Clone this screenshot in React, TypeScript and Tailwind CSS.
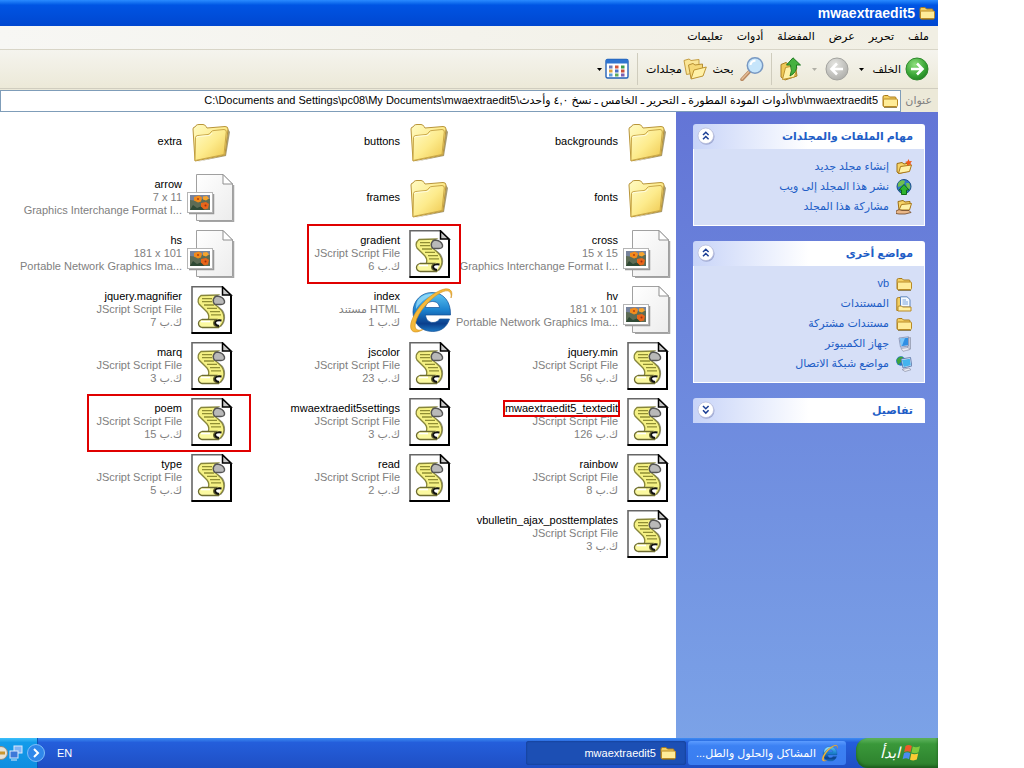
import React from "react";

type Kind = "folder" | "image" | "script" | "html";
type FileItem = {
  name: string;
  kind: Kind;
  type?: string;
  size?: string;
  mark?: "frame-wide" | "frame-low" | "name";
};

const script = (name: string, kb: number, mark?: FileItem["mark"]): FileItem => ({
  name,
  kind: "script",
  type: "JScript Script File",
  size: `ك.ب ${kb}`,
  mark,
});
const folder = (name: string): FileItem => ({ name, kind: "folder" });
const image = (name: string, dims: string, type: string): FileItem => ({
  name,
  kind: "image",
  type: dims,
  size: type,
});

const GIF = "Graphics Interchange Format I...";
const PNG = "Portable Network Graphics Ima...";

const files: FileItem[] = [
  folder("backgrounds"),
  folder("buttons"),
  folder("extra"),
  folder("fonts"),
  folder("frames"),
  image("arrow", "7 x 11", GIF),
  image("cross", "15 x 15", GIF),
  script("gradient", 6, "frame-wide"),
  image("hs", "181 x 101", PNG),
  image("hv", "181 x 101", PNG),
  { name: "index", kind: "html", type: "HTML مستند", size: "ك.ب 1" },
  script("jquery.magnifier", 7),
  script("jquery.min", 56),
  script("jscolor", 23),
  script("marq", 3),
  script("mwaextraedit5_textedit", 126, "name"),
  script("mwaextraedit5settings", 3),
  script("poem", 15, "frame-low"),
  script("rainbow", 8),
  script("read", 2),
  script("type", 5),
  script("vbulletin_ajax_posttemplates", 3),
];

function Defs() {
  return (
    <svg width="0" height="0" className="absolute" aria-hidden="true">
      <defs>
        <linearGradient id="fold" x1="0" y1="0" x2="1" y2="1">
          <stop offset="0" stopColor="#fffbc4" />
          <stop offset="0.5" stopColor="#fdeb8c" />
          <stop offset="1" stopColor="#eec64c" />
        </linearGradient>
        <linearGradient id="page" x1="0" y1="0" x2="1" y2="1">
          <stop offset="0" stopColor="#ffffff" />
          <stop offset="1" stopColor="#ececec" />
        </linearGradient>
        <linearGradient id="ieblue" x1="0" y1="0" x2="0" y2="1">
          <stop offset="0" stopColor="#5cc4f2" />
          <stop offset="0.45" stopColor="#1c83cf" />
          <stop offset="0.8" stopColor="#0b3f8c" />
          <stop offset="1" stopColor="#1c78c4" />
        </linearGradient>
        <radialGradient id="green" cx="0.4" cy="0.3" r="0.8">
          <stop offset="0" stopColor="#8fe07e" />
          <stop offset="0.6" stopColor="#3aa636" />
          <stop offset="1" stopColor="#1b7a1c" />
        </radialGradient>
        <radialGradient id="grey" cx="0.4" cy="0.3" r="0.8">
          <stop offset="0" stopColor="#e6e6e2" />
          <stop offset="1" stopColor="#a9a9a5" />
        </radialGradient>
      </defs>
    </svg>
  );
}

function FolderLarge() {
  return (
    <svg viewBox="0 0 48 48" className="size-12 shrink-0" aria-hidden="true">
      <path d="M9 44 L39 38 L43 14 L41 11 L38 37 Z" fill="#8a7a45" opacity=".75" />
      <path d="M6 11 Q6 9 8 9 L9 7.5 Q10 6.500 12 6.500 L16 6.500 Q18 6.500 19 8.500 L20 10 L38 8.500 Q41 8.500 41 11 L38 37 L8 43 Z" fill="url(#fold)" stroke="#b9953a" />
      <path d="M8.500 20 Q8.500 17.500 11 17.500 L21 16.500 Q23 16 24 14 Q25 12.500 27 12.500 L37 11.500 Q39.500 11.500 39.300 14 L37 36.500 L8 42.500 Z" fill="url(#fold)" stroke="#c9a748" />
      <path d="M9.500 20 Q9.500 18.500 11 18.500 L22 17.500 Q24 17 25 15" fill="none" stroke="#fffde0" />
    </svg>
  );
}

function ImageFile() {
  return (
    <svg viewBox="0 0 48 48" className="size-12 shrink-0" aria-hidden="true">
      <path d="M12 47.500 H46.500 V11" fill="none" stroke="#a5a5a5" strokeWidth="1.500" />
      <path d="M9.500 .5 H36 L45.500 10 V46.500 H9.500 Z" fill="url(#page)" stroke="#a0a0a0" />
      <path d="M36 .5 V10 H45.500 Z" fill="#fff" stroke="#8f8f8f" />
      <path d="M2 39.500 H26.500 V20" fill="none" stroke="#999" strokeWidth="1.500" />
      <rect x=".5" y="18.500" width="25" height="20" fill="#fff" stroke="#b5b5b5" />
      <rect x="3" y="21" width="20" height="15" fill="#5d6c55" />
      <path d="M3 21 h20 v4 l-6 -1 -5 3 -9 -1z" fill="#77839c" />
      <path d="M3 36 l3 -5 4 3 5 -2 3 4z" fill="#2f4a35" />
      <path d="M7 23 l5 -1.500 3 2 -1 4 -3 1 -4 -2z" fill="#f28b1c" />
      <path d="M14 29 l5 -1 3 2 -1 4.500 -4 1 -3 -3z" fill="#e8661a" />
      <path d="M16 22.500 l4 -.5 2 2.500 -3 2 -3 -1z" fill="#f7a52e" />
      <circle cx="11" cy="25" r="1" fill="#b43d10" />
      <circle cx="18.500" cy="31.500" r="1" fill="#a22f0e" />
    </svg>
  );
}

function ScriptFile() {
  return (
    <svg viewBox="0 0 48 48" className="size-12 shrink-0" aria-hidden="true">
      <path d="M5 .8 H35.500 L44 9.500 V47 H5 Z" fill="#fff" stroke="#666" strokeWidth="1.600" />
      <path d="M4.500 47 H44 V9.500" fill="none" stroke="#000" strokeWidth="2" />
      <path d="M35.500 1 V9 H44 Z" fill="#c9c9c9" stroke="#000" strokeWidth="1.500" />
      <path d="M22 29 Q27 33 22 34 L34 41 Q39 36 38 29 Q37 23 29 19 Z" fill="#999" />
      <path d="M14 9.500 L31 9 Q26 12 27 16 Q28 19 32 22 Q37 26 37 32 Q36.500 38 32 41 L27 38 L21 34 Q23 30 20 26 L12 18 Q9.500 13 14 9.500 Z" fill="#f5f184" stroke="#86853a" strokeWidth="1.300" />
      <path d="M30 10 Q36 10.500 37.500 15 Q38 18.500 34 18.500 L28 18.500 Q25.500 16.500 26.500 13 Q28 10 30 10 Z" fill="#b9b9b9" stroke="#555" strokeWidth="1.400" />
      <path d="M15 33.500 H29 Q25 36.500 27.500 39.500 L32 41.500 H15 Q11.500 40.500 11.500 37.500 Q11.500 34.500 15 33.500 Z" fill="#fbf9a0" stroke="#6d6c30" strokeWidth="1.300" />
      <path d="M14 35.500 H23" stroke="#fff" strokeWidth="1.600" />
      <path d="M34.500 34.500 Q28.500 33.500 28 37 Q28.500 39.500 32 40" fill="#fff" stroke="#111" strokeWidth="1.900" />
      <path d="M15 12.700 H25 M15 15.700 H25 M17 19 H27 M20 22.300 H30 M23 25.600 H33 M24 28.900 H34" stroke="#8f8d33" strokeWidth="1.300" />
    </svg>
  );
}

function IeIcon({ className }: { className: string }) {
  return (
    <svg viewBox="0 0 48 48" className={className} aria-hidden="true">
      <path d="M27 6.500 C38 6.500 46 15 45.500 29 H20.500 C21 34 24 36.500 28 36.500 C31 36.500 33.500 35 34.500 33 H44.500 C42 41 36 45.500 27.500 45.500 C16 45.500 8 37 8 26 C8 15 16 6.500 27 6.500 Z M20.500 21.500 H34.500 C34 17.500 31.500 15.500 27.500 15.500 C23.500 15.500 21 18 20.500 21.500 Z" fill="url(#ieblue)" stroke="#0e4d96" strokeWidth=".7" fillRule="evenodd" />
      <path d="M13 14 C17 9 24 7 30 8.500 C24 10 17 14 11 23 C11 19 11.500 16 13 14Z" fill="#a5e2fb" opacity=".7" />
      <path d="M46 12 C49 4 44 .5 35 4.500 C22 10 9 25 6 37 C4 46 10 48.500 18 43.500 C12 45.500 9 43 10.500 37 C13 26 25 12.500 36 6.500 C43 3 47 5 46 12 Z" fill="#f5b93a" stroke="#d08f1c" strokeWidth=".6" />
    </svg>
  );
}

function FolderSmall() {
  return (
    <svg viewBox="0 0 16 16" className="size-4 shrink-0" aria-hidden="true">
      <path d="M1 4 Q1 2.500 2.500 2.500 H6 L7.500 4 H13 Q14 4 14 5 V13.500 H2 Q1 13.500 1 12.500 Z" fill="#f3cf62" stroke="#a97b1c" />
      <path d="M1.500 13 V7 Q1.500 6 2.500 6 H14.500 Q15.500 6 15.500 7 V12.500 Q15.500 13.500 14.500 13.500 H2.500 Z" fill="#ffec98" stroke="#b98a25" />
      <path d="M2 14.500 H15" stroke="#7f6a2e" strokeWidth=".8" />
    </svg>
  );
}

function NewFolder() {
  return (
    <svg viewBox="0 0 16 16" className="size-4 shrink-0" aria-hidden="true">
      <path d="M1 4.500 L6 3.500 L8 5 L13 4 V12 L3 14.500 L1 13 Z" fill="#f7d468" stroke="#9c6e14" />
      <path d="M2.500 14.500 L4.500 7.500 L15.500 6 L13.500 12.500 Z" fill="#fff2a8" stroke="#a9781b" />
      <path d="M12.500 0 L13.500 2.200 L16 2 L14.500 4 L15.500 6.200 L13 5.300 L11 7 L11 4.300 L9 3 L11.500 2.300 Z" fill="#ee5a1c" />
    </svg>
  );
}

function Globe() {
  return (
    <svg viewBox="0 0 16 16" className="size-4 shrink-0" aria-hidden="true">
      <circle cx="8" cy="7.500" r="7" fill="#2f78c6" stroke="#1c4f8c" />
      <path d="M3 3 Q6 0 9 2 L8 5 L5 7 L2 8 Q1 5 3 3Z M10 4 L13 4 Q15 7 14 10 L11 9 Z" fill="#6fc04e" />
      <path d="M8 5.500 L13 11 H10.500 V15.500 H5.500 V11 H3 Z" fill="#2fb52f" stroke="#0f6b16" />
    </svg>
  );
}

function ShareFolder() {
  return (
    <svg viewBox="0 0 16 16" className="size-4 shrink-0" aria-hidden="true">
      <path d="M2 2.500 L7 1.500 L9 3 L14 2.500 V9 L3 11 Z" fill="#f7d468" stroke="#9c6e14" />
      <path d="M3 11 L5.500 5.500 L15.500 4.500 L13.500 11 Z" fill="#fff2a8" stroke="#a9781b" />
      <path d="M0 12 Q3 9.500 6 11.500 L13 11.500 L15 13.500 L9 15 H3 L0 14.500 Z" fill="#e9b789" stroke="#6d4523" strokeWidth=".8" />
    </svg>
  );
}

function DocsIcon() {
  return (
    <svg viewBox="0 0 16 16" className="size-4 shrink-0" aria-hidden="true">
      <path d="M.8 3 Q.8 1.500 2.500 1.500 H5 V14.500 H.8 Z" fill="#f3cf62" stroke="#a97b1c" />
      <path d="M4.500 .8 H11 L14 3.500 V11 H4.500 Z" fill="#f4f9ff" stroke="#5e86bd" />
      <path d="M6.500 4 H10 M6.500 6 H12 M6.500 8 H12" stroke="#79a4dc" />
      <path d="M2 15 V11 Q2 10 3 10 H5.500 L6.500 11 H15 V15 Z" fill="#fff0a4" stroke="#b98a25" />
    </svg>
  );
}

function Computer() {
  return (
    <svg viewBox="0 0 16 16" className="size-4 shrink-0" aria-hidden="true">
      <path d="M11.500 2 L14.500 1.500 V13 L11.500 14 Z" fill="#c4c8d6" stroke="#8d93a8" strokeWidth=".7" />
      <path d="M3 2 L12.500 .8 V10 L4.500 11.200 Z" fill="#dfe5f2" stroke="#7d8bb0" strokeWidth=".8" />
      <path d="M4 2.700 L12 1.700 V9.300 L5.200 10.300 Z" fill="#2f8fe4" />
      <path d="M4 2.700 L9 2 L6 9.800 L5.200 10.300 Z" fill="#7cc6f8" />
      <path d="M5 12.500 L12 11.500 L14 13.500 L7 15.300 Z" fill="#ececf4" stroke="#9298ac" strokeWidth=".7" />
    </svg>
  );
}

function Network() {
  return (
    <svg viewBox="0 0 16 16" className="size-4 shrink-0" aria-hidden="true">
      <circle cx="4.800" cy="5" r="4.700" fill="#2277c4" />
      <path d="M.5 4 Q3 -.5 7 1 L5 6 L2 9 Z" fill="#3ea53a" />
      <path d="M5 3 L14.500 1.500 L15.800 10 L7 12 Z" fill="#dfe5f2" stroke="#4f6da2" strokeWidth=".8" />
      <path d="M6 3.900 L13.800 2.700 L14.800 9.300 L7.700 10.900 Z" fill="#45b4ee" />
      <path d="M6 13.500 L13 12 L15 13.700 L9 15.500 Z" fill="#ececf4" stroke="#8b90a6" strokeWidth=".7" />
    </svg>
  );
}

function RoundArrow({ tone }: { tone: "green" | "grey" }) {
  return (
    <svg viewBox="0 0 24 24" className="size-6 shrink-0" aria-hidden="true">
      <circle cx="12" cy="12" r="11" fill={tone === "green" ? "url(#green)" : "url(#grey)"} stroke={tone === "green" ? "#2f8a2c" : "#a3a39f"} />
      {tone === "green" ? (
        <path d="M6 12 H17 M12 6.500 L17.500 12 L12 17.500" fill="none" stroke="#fff" strokeWidth="2.600" />
      ) : (
        <path d="M18 12 H7 M12 6.500 L6.500 12 L12 17.500" fill="none" stroke="#fff" strokeWidth="2.600" />
      )}
    </svg>
  );
}

function UpFolder() {
  return (
    <svg viewBox="0 0 24 24" className="size-6 shrink-0" aria-hidden="true">
      <path d="M2 7.500 L7 5.500 L9 7 L16 6 L18 19 L6 23 L2 20 Z" fill="#efc957" stroke="#a67d22" />
      <path d="M3.500 22.500 L6.500 10.500 L14 9 L18 10.500 L15.500 20 Z" fill="#fff1a5" stroke="#bd9431" />
      <path d="M14 .8 L21.500 8 H17.500 Q18.500 15 11 19 Q13.500 14 11.500 8 H7.500 Z" fill="#46b13f" stroke="#1f7a22" />
    </svg>
  );
}

function Magnifier() {
  return (
    <svg viewBox="0 0 24 24" className="size-6 shrink-0" aria-hidden="true">
      <path d="M9.500 14.500 L2 22.500" stroke="#b98a62" strokeWidth="3.500" strokeLinecap="round" />
      <path d="M9 14.500 L2 22" stroke="#e6bf98" strokeWidth="1.300" strokeLinecap="round" />
      <circle cx="15" cy="8.500" r="7.700" fill="#c6e5fb" stroke="#7898c2" strokeWidth="1.500" />
      <path d="M10.500 8 Q11 4 15.500 3.500" fill="none" stroke="#fff" strokeWidth="2" />
    </svg>
  );
}

function FoldersIcon() {
  return (
    <svg viewBox="0 0 24 24" className="size-6 shrink-0" aria-hidden="true">
      <path d="M1 3.500 L6 2 L8 3.500 L16 2.500 V15 L3.500 17.500 Z" fill="#fae596" stroke="#c49d41" />
      <path d="M5.500 8 L10 6.500 L12 8 L19.500 7 V17 L8 21.500 Z" fill="#f6d876" stroke="#b78f33" />
      <path d="M8 22 L11 13 L23.300 10 L20 19 Z" fill="#fff1a8" stroke="#bd9431" />
    </svg>
  );
}

function ViewsIcon() {
  const dots = ["#6b7bb8", "#d4553a", "#3f9c4c", "#e0a23c", "#4a6fc4", "#c84f3c", "#5f9ed6", "#60a95c", "#7d5fb0"];
  return (
    <svg viewBox="0 0 24 22" className="h-[22px] w-6 shrink-0" aria-hidden="true">
      <rect x="1" y="1.500" width="22" height="18.500" rx="1.500" fill="#fff" stroke="#2462b8" strokeWidth="1.400" />
      <rect x="1" y="1.500" width="22" height="4" fill="#2f74d0" />
      {dots.map((c, i) => (
        <rect key={i} x={4 + (i % 3) * 6} y={7.5 + Math.floor(i / 3) * 4} width="3.500" height="3" fill={c} />
      ))}
    </svg>
  );
}

function Caret({ muted }: { muted?: boolean }) {
  return (
    <svg viewBox="0 0 5 3" className="h-[3px] w-[5px] shrink-0" aria-hidden="true">
      <path d="M0 0 H5 L2.500 3 Z" fill={muted ? "#b0afa6" : "#000"} />
    </svg>
  );
}

function Chevrons({ down }: { down?: boolean }) {
  return (
    <svg viewBox="0 0 18 18" className="size-[18px]" aria-hidden="true">
      <circle cx="9.500" cy="9.800" r="8" fill="#8b96c4" opacity=".7" />
      <circle cx="8.800" cy="8.800" r="7.800" fill="#fff" stroke="#b6bddb" strokeWidth=".8" />
      <path
        d={down ? "M6 5 L8.800 7.800 L11.600 5 M6 9.300 L8.800 12.100 L11.600 9.300" : "M6 8 L8.800 5.200 L11.600 8 M6 12.300 L8.800 9.500 L11.600 12.300"}
        fill="none"
        stroke="#1c3f94"
        strokeWidth="1.500"
      />
    </svg>
  );
}

function WinFlag() {
  return (
    <svg viewBox="0 0 20 20" className="size-5 shrink-0" aria-hidden="true">
      <path d="M3.500 3 Q6.500 1 9.800 3 L8.500 9 Q5.500 7.300 2.200 9 Z" fill="#ee5a2a" />
      <path d="M10.800 3.500 Q14 5 18 3.300 L16.500 9.300 Q13 11 9.500 9.400 Z" fill="#7ecb3c" />
      <path d="M2 10.200 Q5 8.500 8.300 10.200 L7 16.200 Q4 14.300 .6 16.200 Z" fill="#4a8cf0" />
      <path d="M9.300 10.600 Q12.500 12 16.200 10.500 L14.800 16.600 Q11.500 18.200 8 16.700 Z" fill="#fbcb34" />
    </svg>
  );
}

const largeIcons: Record<Kind, React.ReactNode> = {
  folder: <FolderLarge />,
  image: <ImageFile />,
  script: <ScriptFile />,
  html: <IeIcon className="size-12 shrink-0" />,
};

function FileTile({ file }: { file: FileItem }) {
  return (
    <li className="relative flex h-14 items-center gap-[5px]">
      {largeIcons[file.kind]}
      <div className="flex min-w-0 flex-col items-start pb-[2px] leading-[13px] whitespace-nowrap">
        <span dir="ltr" className={file.mark === "name" ? "outline-2 outline-[#e00000]" : ""}>
          {file.name}
        </span>
        {file.type && (
          <span dir={file.kind === "html" ? "rtl" : "ltr"} className="text-[#808080]">
            {file.type}
          </span>
        )}
        {file.size && (
          <span dir={file.kind === "image" ? "ltr" : "rtl"} className="text-[#808080]">
            {file.size}
          </span>
        )}
      </div>
      {file.mark === "frame-wide" && (
        <span className="pointer-events-none absolute -inset-y-0.5 -right-2 left-[72px] border-2 border-[#e00000]" />
      )}
      {file.mark === "frame-low" && (
        <span className="pointer-events-none absolute -right-4 -bottom-0.5 left-[70px] top-0 border-2 border-[#e00000]" />
      )}
    </li>
  );
}

function TaskPanel({ title, links }: { title: string; links?: { icon: React.ReactNode; label: string }[] }) {
  return (
    <section>
      <header className="flex h-[25px] items-center justify-between rounded-t-[3px] bg-linear-to-l from-white from-50% to-[#c8d4f8] pr-3 pl-1">
        <h2 className="text-[11px] font-bold text-[#215dc6]">{title}</h2>
        <button type="button" aria-label={title} className="pb-[2px]">
          <Chevrons down={!links} />
        </button>
      </header>
      {links && (
        <ul className="border border-t-0 border-white bg-[#d6dff7] px-3 pt-2 pb-2">
          {links.map((l) => (
            <li key={l.label} className="h-5">
              <a href="#" className="flex h-5 items-center gap-[7px] text-[#215dc6]">
                {l.icon}
                <span className="pb-[2px] leading-4">{l.label}</span>
              </a>
            </li>
          ))}
        </ul>
      )}
    </section>
  );
}

const menus = ["ملف", "تحرير", "عرض", "المفضلة", "أدوات", "تعليمات"];

export default function App() {
  return (
    <div dir="rtl" className="min-h-screen bg-white pr-[86px] font-['Liberation_Sans','DejaVu_Sans',sans-serif] text-[11px] text-black">
      <Defs />
      <div className="flex min-h-screen flex-col">
        <header className="flex h-[26px] items-center gap-1 bg-linear-to-b from-[#2a8bff] from-0% via-[#0054e3] via-20% to-[#0047d0] px-[3px] text-white">
          <FolderSmall />
          <h1 className="text-[14px] font-bold">mwaextraedit5</h1>
        </header>

        <nav className="flex h-6 items-center gap-[14px] border-b border-[#d8d5c7] bg-linear-to-l from-[#f1efe4] to-[#f7f7f4] px-[9px] pb-1">
          {menus.map((m) => (
            <button key={m} type="button" className="leading-4">
              {m}
            </button>
          ))}
        </nav>

        <div className="flex h-[39px] items-center border-b border-[#d0cdbf] bg-linear-to-b from-[#f5f4ee] to-[#ece9d8] px-[9px]">
          <button type="button" className="flex items-center gap-1">
            <RoundArrow tone="green" />
            <span className="w-7">الخلف</span>
          </button>
          <button type="button" aria-label="الخلف" className="flex w-6 justify-center">
            <Caret />
          </button>
          <button type="button" aria-label="إلى الأمام">
            <RoundArrow tone="grey" />
          </button>
          <span className="flex w-[22px] justify-center">
            <Caret muted />
          </span>
          <button type="button" aria-label="لأعلى">
            <UpFolder />
          </button>
          <span className="mx-[7px] h-8 w-px bg-[#cfccbd]" />
          <button type="button" className="flex items-center gap-px">
            <Magnifier />
            <span className="w-8">بحث</span>
          </button>
          <button type="button" className="flex items-center gap-px">
            <FoldersIcon />
            <span className="w-9">مجلدات</span>
          </button>
          <span className="mx-2 h-8 w-px bg-[#cfccbd]" />
          <button type="button" aria-label="طرق العرض" className="flex items-center gap-[3px]">
            <ViewsIcon />
            <Caret />
          </button>
        </div>

        <div className="flex h-[23px] items-center bg-[#ece9d8] pr-[6px]">
          <label htmlFor="address" className="w-[31px] text-[#808080]">
            عنوان
          </label>
          <div className="flex h-[22px] min-w-0 flex-1 items-center gap-1 border border-[#7f9db9] bg-white px-[2px]">
            <FolderSmall />
            <input
              id="address"
              dir="ltr"
              className="min-w-0 flex-1 bg-transparent text-right outline-none"
              defaultValue="C:\Documents and Settings\pc08\My Documents\mwaextraedit5\أدوات المودة المطورة ـ التحرير ـ الخامس ـ نسخ ٤,٠ وأحدث\vb\mwaextraedit5"
            />
          </div>
        </div>

        <div className="flex flex-1">
          <aside className="flex w-[262px] shrink-0 flex-col gap-[15px] bg-linear-to-b from-[#6375d6] to-[#7ba2e7] pt-3 pr-[13px] pl-[17px]">
            <TaskPanel
              title="مهام الملفات والمجلدات"
              links={[
                { icon: <NewFolder />, label: "إنشاء مجلد جديد" },
                { icon: <Globe />, label: "نشر هذا المجلد إلى ويب" },
                { icon: <ShareFolder />, label: "مشاركة هذا المجلد" },
              ]}
            />
            <TaskPanel
              title="مواضع أخرى"
              links={[
                { icon: <FolderSmall />, label: "vb" },
                { icon: <DocsIcon />, label: "المستندات" },
                { icon: <FolderSmall />, label: "مستندات مشتركة" },
                { icon: <Computer />, label: "جهاز الكمبيوتر" },
                { icon: <Network />, label: "مواضع شبكة الاتصال" },
              ]}
            />
            <TaskPanel title="تفاصيل" />
          </aside>
          <main className="min-w-0 flex-1 pt-[2px] pr-[5px] pl-[17px]">
            <ul className="grid grid-cols-3">
              {files.map((f) => (
                <FileTile key={f.name} file={f} />
              ))}
            </ul>
          </main>
        </div>

        <footer className="flex h-[30px] items-center bg-linear-to-b from-[#3f8cf3] from-0% via-[#245edb] via-15% to-[#1f4fc4] text-white">
          <button type="button" className="flex h-full w-[82px] items-center gap-[2px] rounded-l-xl bg-linear-to-b from-[#5fb55f] via-[#3a983a] via-20% to-[#2c7f2c] pr-4 shadow-[inset_0_-2px_3px_#1d5c1d]">
            <WinFlag />
            <span className="text-[15px] italic">ابدأ</span>
          </button>
          <button type="button" className="mr-[10px] flex h-6 w-[158px] items-center gap-1 rounded-[3px] bg-linear-to-b from-[#5c9cff] via-[#3c81f3] via-20% to-[#3a7df0] pr-2 whitespace-nowrap">
            <IeIcon className="size-[18px] shrink-0" />
            <span>المشاكل والحلول والطل...</span>
          </button>
          <button type="button" className="mr-[2px] flex h-6 w-[160px] items-center gap-1 rounded-[3px] bg-[#1c4fb4] pr-[10px] shadow-[inset_0_0_2px_#0d2f78]">
            <FolderSmall />
            <span>mwaextraedit5</span>
          </button>
          <span className="mr-auto ml-[19px]">EN</span>
          <div className="flex h-full w-[38px] items-center gap-1 border-r border-[#0b55b4] bg-linear-to-b from-[#3cc0fa] via-[#129bea] via-15% to-[#0f8ee0]">
            <button type="button" aria-label="إظهار الرموز" className="-mr-2 size-[18px] shrink-0">
              <svg viewBox="0 0 18 18" className="size-[18px]" aria-hidden="true">
                <circle cx="9" cy="9" r="8.500" fill="#2f87ea" stroke="#7fbff8" />
                <path d="M7 5 L11 9 L7 13" fill="none" stroke="#fff" strokeWidth="2" />
              </svg>
            </button>
            <svg viewBox="0 0 26 16" className="h-4 w-[26px] shrink-0" aria-hidden="true">
              <rect x="17" y="1" width="8" height="7" fill="#7fb4f5" stroke="#dce9fb" />
              <rect x="13" y="6" width="8" height="7" fill="#3e78d8" stroke="#dce9fb" />
              <path d="M14 15 H20" stroke="#dce9fb" />
              <circle cx="4" cy="8" r="6.500" fill="#e6e2d8" stroke="#8f8a7c" />
              <path d="M0 8 H8" stroke="#c9962e" strokeWidth="3" />
            </svg>
          </div>
        </footer>
      </div>
    </div>
  );
}
